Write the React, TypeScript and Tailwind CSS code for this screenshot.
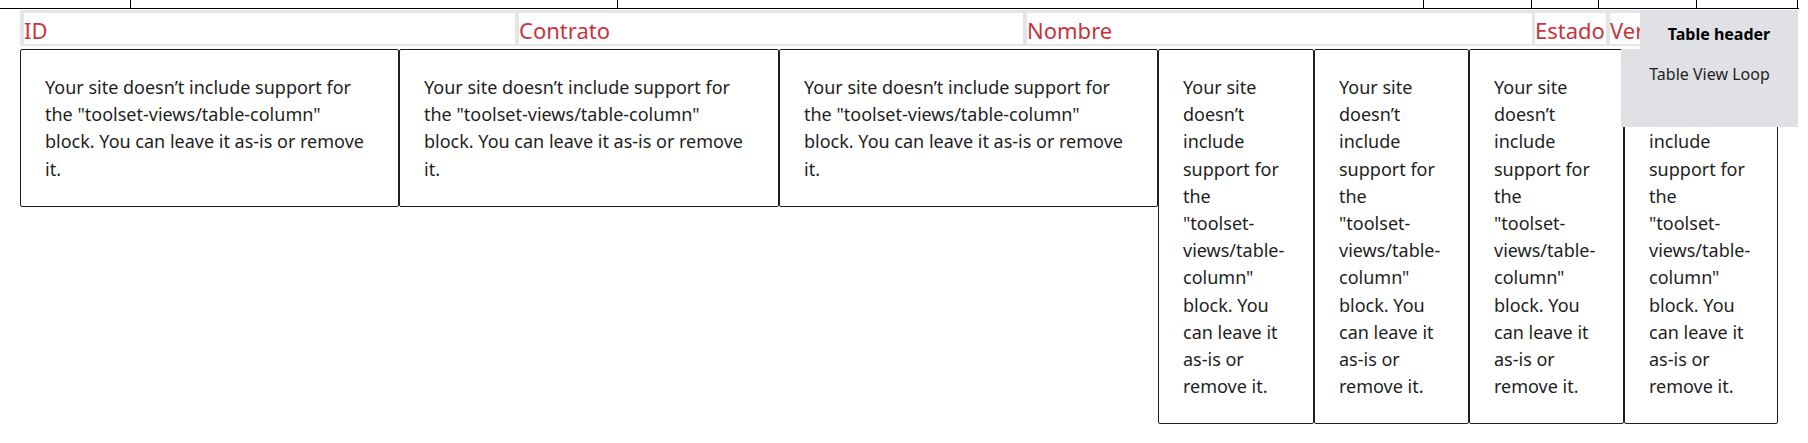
import React from "react";

const WIDE = [
  "Your site doesn\u2019t include support for",
  'the "toolset-views/table-column"',
  "block. You can leave it as-is or remove",
  "it.",
];

const NARROW = [
  "Your site",
  "doesn\u2019t",
  "include",
  "support for",
  "the",
  '"toolset-',
  "views/table-",
  'column"',
  "block. You",
  "can leave it",
  "as-is or",
  "remove it.",
];

const topCols = [131, 487, 806, 108, 67, 98, 101];
const cells = [
  { w: 379, lines: WIDE },
  { w: 380, lines: WIDE },
  { w: 379, lines: WIDE },
  { w: 156, lines: NARROW },
  { w: 155, lines: NARROW },
  { w: 155, lines: NARROW },
  { w: 154, lines: NARROW },
];

export default function App() {
  return (
    <div
      className="relative w-[1808px] h-[443px] bg-white overflow-hidden text-[#1e1e1e]"
      style={{ fontFamily: '"Noto Sans", "Open Sans", sans-serif' }}
    >
      {/* cut-off row of a previous table */}
      <div className="flex h-[9px] w-[1799px] border-b border-black">
        {topCols.map((w, i) => (
          <div
            key={i}
            className="h-full border-r border-black shrink-0"
            style={{ width: w }}
          />
        ))}
      </div>

      {/* header band */}
      <div className="ml-[20px] mt-[1px] w-[1778px] h-[36px] bg-[#e4e5e7] flex gap-[4px] pl-[4px] pt-[3px] pb-[2px] text-[22px] leading-[35px] text-[#c6343c]">
        <div className="w-[491px] bg-white shrink-0">ID</div>
        <div className="w-[504px] bg-white shrink-0">Contrato</div>
        <div className="w-[505px] bg-white shrink-0 mr-[-1px]">Nombre</div>
        <div className="w-[71px] bg-white shrink-0">Estado</div>
        <div className="w-[60px] bg-white shrink-0 overflow-hidden whitespace-nowrap">Versión</div>
      </div>

      {/* body cells */}
      <div className="ml-[20px] mt-[3px] flex items-start">
        {cells.map((c, i) => (
          <div
            key={i}
            className="shrink-0 border border-[#1e1e1e] rounded-[2px] px-[24px] pt-[24px] pb-[23px] text-[18px] leading-[27.2px]"
            style={{ width: c.w }}
          >
            {c.lines.map((l, j) => (
              <span key={j} className="block whitespace-nowrap">
                {l}
              </span>
            ))}
          </div>
        ))}
      </div>

      {/* block toolbar overlay */}
      <div className="absolute left-[1640px] top-[10px] w-[158px] h-[39px] bg-[#e0e1e5] flex justify-center pt-[12px] text-[16px] leading-[24px] font-bold text-black">
        Table header
      </div>
      <div className="absolute left-[1621px] top-[49px] w-[177px] h-[78px] bg-[#e0e1e5] flex justify-center pt-[13px] text-[16px] leading-[24px] text-[#1e1e1e]">
        Table View Loop
      </div>
    </div>
  );
}
